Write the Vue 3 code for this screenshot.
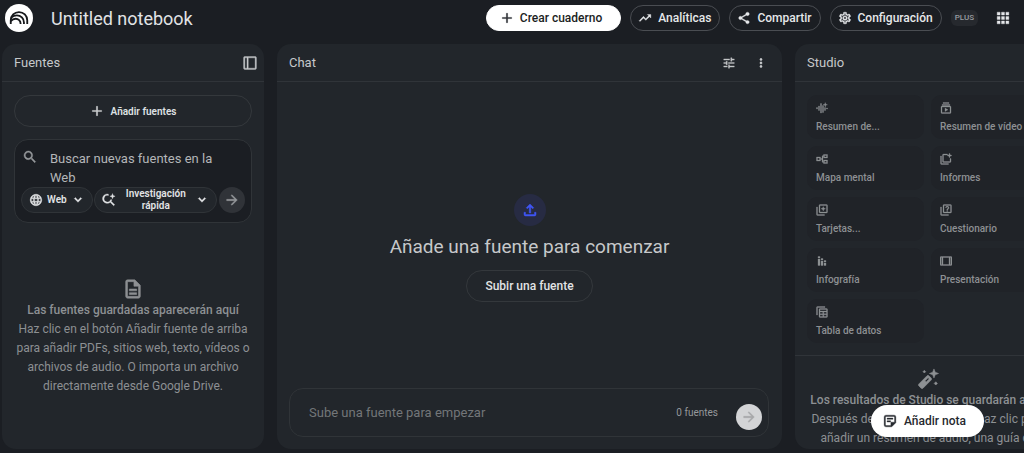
<template>
  <div class="app">
    <header class="topbar">
      <a class="logo" href="#" aria-label="NotebookLM">
        <svg viewBox="0 0 24 24" fill="none" stroke="#16181b" stroke-width="2">
          <path d="M3 18.500v-4a9 9 0 0 1 18 0v4" />
          <path d="M3.800 11.400c1.600-1.500 3.600-2.300 5.900-2.300a7.700 7.700 0 0 1 7.700 7.700v1.700" />
          <path d="M3 15.400c1.400-1.700 3.300-2.600 5.400-2.600a5.300 5.300 0 0 1 5.300 5.300v.4" />
        </svg>
      </a>
      <h1 class="title">Untitled notebook</h1>

      <div class="actions">
        <button class="pill primary">
          <svg class="icon" viewBox="0 0 24 24"><path :d="icons.add" /></svg>
          Crear cuaderno
        </button>
        <button v-for="action in actions" :key="action.label" class="pill">
          <svg class="icon" viewBox="0 0 24 24"><path :d="icons[action.icon]" /></svg>
          {{ action.label }}
        </button>
        <span class="plus">PLUS</span>
        <button class="icon-button apps" aria-label="Apps">
          <svg class="icon" viewBox="0 0 24 24"><path :d="icons.apps" /></svg>
        </button>
      </div>
    </header>

    <main class="workspace">
      <section class="panel">
        <div class="panel-header">
          <h2>Fuentes</h2>
          <button class="icon-button" aria-label="Panel">
            <svg class="icon" viewBox="0 0 24 24"><path fill-rule="evenodd" :d="icons.dock" /></svg>
          </button>
        </div>

        <div class="sources">
          <button class="add-source">
            <svg class="icon" viewBox="0 0 24 24"><path :d="icons.add" /></svg>
            Añadir fuentes
          </button>

          <form class="search" @submit.prevent>
            <div class="search-row">
              <svg class="icon" viewBox="0 0 24 24"><path :d="icons.search" /></svg>
              <textarea v-model="search" rows="2" aria-label="Buscar nuevas fuentes en la Web"
                placeholder="Buscar nuevas fuentes en la Web"></textarea>
            </div>
            <div class="search-tools">
              <button type="button" class="chip" aria-haspopup="menu">
                <svg class="icon" viewBox="0 0 24 24"><path :d="icons.globe" /></svg>
                <span>Web</span>
                <svg class="icon" viewBox="0 0 24 24"><path :d="icons.down" /></svg>
              </button>
              <button type="button" class="chip wide" aria-haspopup="menu">
                <svg class="icon" viewBox="0 0 24 24"><path :d="icons.searchSpark" /></svg>
                <span>Investigación rápida</span>
                <svg class="icon" viewBox="0 0 24 24"><path :d="icons.down" /></svg>
              </button>
              <button class="send dark" aria-label="Enviar">
                <svg class="icon" viewBox="0 0 24 24"><path :d="icons.arrow" /></svg>
              </button>
            </div>
          </form>
        </div>

        <div class="empty">
          <svg class="icon large" viewBox="0 0 24 24"><path :d="icons.doc" /></svg>
          <p class="strong">Las fuentes guardadas aparecerán aquí</p>
          <p>Haz clic en el botón Añadir fuente de arriba<br>para añadir PDFs, sitios web, texto, vídeos o<br>archivos
            de audio. O importa un archivo<br>directamente desde Google Drive.</p>
        </div>
      </section>

      <section class="panel">
        <div class="panel-header">
          <h2>Chat</h2>
          <div class="header-tools">
            <button class="icon-button" aria-label="Ajustes">
              <svg class="icon" viewBox="0 0 24 24"><path :d="icons.tune" /></svg>
            </button>
            <button class="icon-button" aria-label="Más">
              <svg class="icon" viewBox="0 0 24 24"><path :d="icons.more" /></svg>
            </button>
          </div>
        </div>

        <div class="chat">
          <div class="upload">
            <svg class="icon" viewBox="0 0 24 24"><path :d="icons.upload" /></svg>
          </div>
          <h3>Añade una fuente para comenzar</h3>
          <button class="upload-button">Subir una fuente</button>
        </div>

        <form class="composer" @submit.prevent>
          <input v-model="message" type="text" aria-label="Mensaje" placeholder="Sube una fuente para empezar">
          <span class="count">0 fuentes</span>
          <button class="send" aria-label="Enviar">
            <svg class="icon" viewBox="0 0 24 24"><path :d="icons.arrow" /></svg>
          </button>
        </form>
      </section>

      <section class="panel">
        <div class="panel-header">
          <h2>Studio</h2>
        </div>

        <div class="tiles">
          <button v-for="tile in tiles" :key="tile.label" class="tile">
            <svg class="icon" viewBox="0 0 24 24"><path fill-rule="evenodd" :d="icons[tile.icon]" /></svg>
            {{ tile.label }}
          </button>
        </div>

        <div class="results">
          <svg class="icon large" viewBox="0 0 24 24"><path fill-rule="evenodd" :d="icons.wand" /></svg>
          <p class="strong">Los resultados de Studio se guardarán aquí.</p>
          <p>Después de añadir las fuentes, haz clic para<br>añadir un resumen de audio, una guía de</p>
        </div>
      </section>
    </main>

    <button class="note">
      <svg class="icon" viewBox="0 0 24 24"><path :d="icons.note" /></svg>
      Añadir nota
    </button>
  </div>
</template>

<script setup>

import { ref } from 'vue';

const search = ref('');
const message = ref('');

const actions = [
  { label: 'Analíticas', icon: 'trending' },
  { label: 'Compartir', icon: 'share' },
  { label: 'Configuración', icon: 'settings' }
];

const tiles = [
  { label: 'Resumen de...', icon: 'audio' },
  { label: 'Resumen de vídeo', icon: 'video' },
  { label: 'Mapa mental', icon: 'mindmap' },
  { label: 'Informes', icon: 'report' },
  { label: 'Tarjetas...', icon: 'cards' },
  { label: 'Cuestionario', icon: 'quiz' },
  { label: 'Infografía', icon: 'bars' },
  { label: 'Presentación', icon: 'slides' },
  { label: 'Tabla de datos', icon: 'table' }
];

const icons = {
  add: 'M20 13h-7v7h-2v-7H4v-2h7V4h2v7h7z',
  trending: 'M16 6l2.29 2.29-4.88 4.88-4-4L2 16.59 3.41 18l6-6 4 4 6.3-6.29L22 12V6z',
  share: 'M18 16.08c-.76 0-1.44.3-1.96.77L8.91 12.7c.05-.23.09-.46.09-.7s-.04-.47-.09-.7l7.05-4.11c.54.5 1.25.81 2.04.81 1.66 0 3-1.34 3-3s-1.34-3-3-3-3 1.34-3 3c0 .24.04.47.09.7L8.04 9.81C7.5 9.31 6.79 9 6 9c-1.66 0-3 1.34-3 3s1.34 3 3 3c.79 0 1.5-.31 2.04-.81l7.12 4.16c-.05.21-.08.43-.08.65 0 1.61 1.31 2.92 2.92 2.92s2.92-1.31 2.92-2.92-1.31-2.92-2.92-2.92z',
  settings: 'M19.43 12.98c.04-.32.07-.64.07-.98 0-.34-.03-.66-.07-.98l2.11-1.65c.19-.15.24-.42.12-.64l-2-3.46c-.09-.16-.26-.25-.44-.25-.06 0-.12.01-.17.03l-2.49 1c-.52-.4-1.08-.73-1.69-.98l-.38-2.65C14.46 2.18 14.25 2 14 2h-4c-.25 0-.46.18-.49.42l-.38 2.65c-.61.25-1.17.59-1.69.98l-2.49-1c-.06-.02-.12-.03-.18-.03-.17 0-.34.09-.43.25l-2 3.46c-.13.22-.07.49.12.64l2.11 1.65c-.04.32-.07.65-.07.98 0 .33.03.66.07.98l-2.11 1.65c-.19.15-.24.42-.12.64l2 3.46c.09.16.26.25.44.25.06 0 .12-.01.17-.03l2.49-1c.52.4 1.08.73 1.69.98l.38 2.65c.03.24.24.42.49.42h4c.25 0 .46-.18.49-.42l.38-2.65c.61-.25 1.17-.59 1.69-.98l2.49 1c.06.02.12.03.18.03.17 0 .34-.09.43-.25l2-3.46c.12-.22.07-.49-.12-.64l-2.11-1.65zm-1.98-1.71c.04.31.05.52.05.73 0 .21-.02.43-.05.73l-.14 1.13.89.7 1.08.84-.7 1.21-1.27-.51-1.04-.42-.9.68c-.43.32-.84.56-1.25.73l-1.06.43-.16 1.13-.2 1.35h-1.4l-.19-1.35-.16-1.13-1.06-.43c-.43-.18-.83-.41-1.23-.71l-.91-.7-1.06.43-1.27.51-.7-1.21 1.08-.84.89-.7-.14-1.13c-.03-.31-.05-.54-.05-.74s.02-.43.05-.73l.14-1.13-.89-.7-1.08-.84.7-1.21 1.27.51 1.04.42.9-.68c.43-.32.84-.56 1.25-.73l1.06-.43.16-1.13.2-1.35h1.39l.19 1.35.16 1.13 1.06.43c.43.18.83.41 1.23.71l.91.7 1.06-.43 1.27-.51.7 1.21-1.07.85-.89.7.14 1.13zM12 8c-2.21 0-4 1.79-4 4s1.79 4 4 4 4-1.79 4-4-1.79-4-4-4zm0 6c-1.1 0-2-.9-2-2s.9-2 2-2 2 .9 2 2-.9 2-2 2z',
  apps: 'M2 2h5v5H2zM9.5 2h5v5h-5zM17 2h5v5h-5zM2 9.5h5v5H2zM9.5 9.5h5v5h-5zM17 9.5h5v5h-5zM2 17h5v5H2zM9.5 17h5v5h-5zM17 17h5v5h-5z',
  dock: 'M3 1h18a2 2 0 0 1 2 2v18a2 2 0 0 1-2 2H3a2 2 0 0 1-2-2V3a2 2 0 0 1 2-2zM3.2 3.2v17.600h3.600V3.200zM9 3.200v17.600h11.800V3.200z',
  tune: 'M3 17v2h6v-2H3zM3 5v2h10V5H3zm10 16v-2h8v-2h-8v-2h-2v6h2zM7 9v2H3v2h4v2h2V9H7zm14 4v-2H11v2h10zm-6-4h2V7h4V5h-4V3h-2v6z',
  more: 'M12 8c1.1 0 2-.9 2-2s-.9-2-2-2-2 .9-2 2 .9 2 2 2zm0 2c-1.1 0-2 .9-2 2s.9 2 2 2 2-.9 2-2-.9-2-2-2zm0 6c-1.1 0-2 .9-2 2s.9 2 2 2 2-.9 2-2-.9-2-2-2z',
  search: 'M15.5 14h-.79l-.28-.27A6.471 6.471 0 0 0 16 9.5 6.5 6.5 0 1 0 9.5 16c1.61 0 3.09-.59 4.23-1.57l.27.28v.79l5 4.99L20.49 19l-4.99-5zm-6 0C7.01 14 5 11.99 5 9.5S7.01 5 9.5 5 14 7.01 14 9.5 11.99 14 9.5 14z',
  globe: 'M11.99 2C6.47 2 2 6.48 2 12s4.47 10 9.99 10C17.52 22 22 17.52 22 12S17.52 2 11.99 2zm6.93 6h-2.95c-.32-1.25-.78-2.45-1.38-3.56 1.84.63 3.37 1.91 4.33 3.56zM12 4.04c.83 1.2 1.48 2.53 1.91 3.96h-3.82c.43-1.43 1.08-2.76 1.91-3.96zM4.26 14C4.1 13.36 4 12.69 4 12s.1-1.36.26-2h3.38c-.08.66-.14 1.32-.14 2s.06 1.34.14 2H4.26zm.82 2h2.95c.32 1.25.78 2.45 1.38 3.56-1.84-.63-3.37-1.9-4.33-3.56zm2.95-8H5.08c.96-1.66 2.49-2.93 4.33-3.56C8.81 5.55 8.35 6.75 8.03 8zM12 19.96c-.83-1.2-1.48-2.53-1.91-3.96h3.82c-.43 1.43-1.08 2.76-1.91 3.96zM14.34 14H9.66c-.09-.66-.16-1.32-.16-2s.07-1.35.16-2h4.68c.09.65.16 1.32.16 2s-.07 1.34-.16 2zm.25 5.56c.6-1.11 1.06-2.31 1.38-3.56h2.95c-.96 1.65-2.49 2.93-4.33 3.56zM16.36 14c.08-.66.14-1.32.14-2s-.06-1.34-.14-2h3.38c.16.64.26 1.31.26 2s-.1 1.36-.26 2h-3.38z',
  down: 'M7.4 7.8L12 12.4l4.6-4.6L18.4 9.6 12 16 5.6 9.6z',
  searchSpark: 'M11 2v2.3A5.7 5.7 0 1 0 14.7 11.5h2.4a8 8 0 0 1-1.4 2.7l6 6-1.7 1.7-6-6A8 8 0 1 1 11 2zM18 1l1.2 3.3L22.5 5.5l-3.3 1.2L18 10l-1.2-3.3-3.3-1.2 3.3-1.2z',
  arrow: 'M12 4l-1.41 1.41L16.17 11H4v2h12.17l-5.58 5.59L12 20l8-8z',
  doc: 'M8 16h8v2H8zm0-4h8v2H8zm6-10H6c-1.1 0-2 .9-2 2v16c0 1.1.89 2 1.99 2H18c1.1 0 2-.9 2-2V8l-6-6zm4 18H6V4h7v5h5v11z',
  upload: 'M11 16V7.85L8.4 10.45 7 9l5-5 5 5-1.4 1.45L13 7.85V16zM4 15h2v3h12v-3h2v3a2 2 0 0 1-2 2H6a2 2 0 0 1-2-2z',
  audio: 'M1 11h2v3H1zM5 8h2v9H5zM9 3h2v19H9zM13 7h2v14h-2zM17 11h2v6h-2zM21 12h2v2h-2zM18.5 1l1.1 3.4L23 5.5l-3.4 1.1L18.5 10l-1.1-3.4L14 5.5l3.4-1.1z',
  video: 'M6 1h12v2H6zM4 5h16v2H4zM4 8h16a2 2 0 0 1 2 2v11a2 2 0 0 1-2 2H4a2 2 0 0 1-2-2V10a2 2 0 0 1 2-2zm0 2.2v10.6h16V10.2zm6 1.8l6 3.5-6 3.5z',
  mindmap: 'M1 8h8v3h3V7a2 2 0 0 1 2-2h1V3h8v7h-8V7h-1v10h1v-3h8v7h-8v-2h-1a2 2 0 0 1-2-2v-4H9v3H1zm2 2v4h4v-4zm14-5v3h4V5zm0 11v3h4v-3z',
  report: 'M1 6h2v15h14v2H3a2 2 0 0 1-2-2zM7 2h8v2H7v13h13v-6h2v6a2 2 0 0 1-2 2H7a2 2 0 0 1-2-2V4a2 2 0 0 1 2-2zM19 0l1.3 3.7L24 5l-3.7 1.3L19 10l-1.3-3.7L14 5l3.7-1.3z',
  cards: 'M1 6h2v15h14v2H3a2 2 0 0 1-2-2zM8 1h13a2 2 0 0 1 2 2v13a2 2 0 0 1-2 2H8a2 2 0 0 1-2-2V3a2 2 0 0 1 2-2zm0 2v13h13V3zm6.5 2l1.3 3.2L19 9.5l-3.2 1.3-1.3 3.2-1.3-3.2L10 9.5l3.2-1.3z',
  quiz: 'M1 6h2v15h14v2H3a2 2 0 0 1-2-2zM8 1h13a2 2 0 0 1 2 2v13a2 2 0 0 1-2 2H8a2 2 0 0 1-2-2V3a2 2 0 0 1 2-2zm0 2v13h13V3zm5.500 10h2v2h-2zM11 7.500a3.500 3.500 0 1 1 5.600 2.800c-.8.6-1.100.9-1.100 1.700h-2c0-1.800.8-2.500 1.700-3.200a1.500 1.500 0 1 0-2.200-1.300z',
  bars: 'M4 3h4v3H4zM4 8h4v13H4zM10 7h4v3h-4zM10 12h4v9h-4zM16 11h4v3h-4zM16 16h4v5h-4z',
  slides: 'M2 3h20a2 2 0 0 1 2 2v14a2 2 0 0 1-2 2H2a2 2 0 0 1-2-2V5a2 2 0 0 1 2-2zm0 2v14h1.500V5zm4 0v14h12V5zm14.500 0v14H22V5z',
  table: 'M1 3a2 2 0 0 1 2-2h15v2H3v15H1zM8 5h13a2 2 0 0 1 2 2v14a2 2 0 0 1-2 2H8a2 2 0 0 1-2-2V7a2 2 0 0 1 2-2zm0 2v3h13V7zm0 5v3.500h5.500V12zm7.500 0v3.500H21V12zM8 17.500V21h5.500v-3.500zm7.500 0V21H21v-3.500z',
  wand: 'M13 8.500l2.500 2.500a1.500 1.500 0 0 1 0 2.100L6.600 22a1.500 1.500 0 0 1-2.100 0L2 19.500a1.500 1.500 0 0 1 0-2.100L10.900 8.500a1.500 1.500 0 0 1 2.100 0zm-.9 2.200l-3.300 3.300 1.200 1.200 3.300-3.300zM18.500 1l1.400 3.600L23.500 6l-3.600 1.400L18.500 11l-1.400-3.600L13.500 6l3.600-1.400zM8 2.500l1.500 1.500L8 5.500 6.500 4zM20.500 15l1.800 1.800-1.800 1.800-1.800-1.800z',
  note: 'M5 2h14a3 3 0 0 1 3 3v10l-7 7H5a3 3 0 0 1-3-3V5a3 3 0 0 1 3-3zm0 2.200a.8.8 0 0 0-.8.8v14c0 .5.3.8.8.8h8.500V14h6.300V5a.8.8 0 0 0-.8-.8zM7 7h10v2.200H7zM7 11.500h6v2.200H7z'
};

</script>

<style>
body {
  background-color: #1b1e23;
}
</style>

<style scoped>
.app {
  display: flex;
  flex-direction: column;
  height: 100vh;
  overflow: hidden;
  box-sizing: border-box;
  padding-bottom: 4px;
  background-color: #1b1e23;
  color: #c6c8ca;
  font-family: "Google Sans Text", Roboto, "Liberation Sans", sans-serif;
  font-size: 12px;
}

h1,
h2,
h3,
p {
  margin: 0;
  font-weight: 400;
}

button {
  display: flex;
  align-items: center;
  justify-content: center;
  box-sizing: border-box;
  flex-shrink: 0;
  padding: 0;
  border: none;
  background-color: transparent;
  color: inherit;
  font-family: inherit;
  font-size: 12px;
  cursor: pointer;
}

.icon {
  display: block;
  flex-shrink: 0;
  width: 14px;
  height: 14px;
  fill: currentColor;
  stroke: currentColor;
  stroke-width: 0.6;
}

.icon.large {
  width: 22px;
  height: 22px;
  margin-bottom: 1px;
}

.topbar {
  display: flex;
  align-items: center;
  flex-shrink: 0;
  height: 36px;
  padding: 0 14px 0 5px;
  margin-bottom: 8px;
}

.logo {
  display: flex;
  align-items: center;
  justify-content: center;
  width: 28px;
  height: 28px;
  border-radius: 50%;
  background-color: #fff;
}

.logo svg {
  width: 22px;
  height: 22px;
}

.title {
  margin-left: 18px;
  font-size: 18px;
  color: #e1e3e5;
}

.actions {
  display: flex;
  align-items: center;
  gap: 9px;
  margin-left: auto;
}

.pill {
  gap: 6px;
  height: 26px;
  padding: 0 8px 0 7px;
  border: 1px solid #4a4d52;
  border-radius: 13px;
  color: #e6e8ea;
  font-weight: 500;
}

.pill.primary {
  padding: 0 18px 0 13px;
  border-color: #fff;
  background-color: #fff;
  color: #1b1e23;
}

.plus {
  padding: 0 4px;
  border-radius: 6px;
  background-color: #26292e;
  color: #9a9da1;
  font-size: 8px;
  font-weight: 500;
  line-height: 16px;
}

.icon-button.apps {
  margin-left: 9px;
  color: #e6e8ea;
}

.workspace {
  display: grid;
  grid-template-columns: 262px minmax(0, 1fr) 266px;
  gap: 13px;
  flex: 1;
  min-height: 0;
  min-width: 1059px;
  padding-left: 2px;
}

.panel {
  display: flex;
  flex-direction: column;
  min-height: 0;
  overflow: hidden;
  border-radius: 14px;
  background-color: #22262b;
}

.panel-header {
  display: flex;
  align-items: center;
  justify-content: space-between;
  flex-shrink: 0;
  box-sizing: border-box;
  height: 38px;
  padding: 0 7px 0 12px;
  border-bottom: 1px solid #303439;
}

.panel-header h2 {
  font-size: 13px;
}

.header-tools {
  display: flex;
  gap: 18px;
  padding-right: 7px;
}

.sources {
  padding: 13px 12px 0;
}

.add-source {
  gap: 7px;
  width: 100%;
  height: 32px;
  border: 1px solid #34383c;
  border-radius: 16px;
  color: #dfe1e3;
  font-size: 10px;
  font-weight: 600;
}

.search {
  box-sizing: border-box;
  margin-top: 12px;
  padding: 9px 6px;
  border: 1px solid #303438;
  border-radius: 14px;
  background-color: #1b1e23;
}

.search-row {
  display: flex;
  gap: 12px;
  padding: 0 1px;
  color: #95989b;
}

.search-row .icon {
  width: 16px;
  height: 16px;
}

.search textarea {
  flex: 1;
  min-width: 0;
  padding: 0 24px 0 0;
  border: none;
  outline: none;
  resize: none;
  background-color: transparent;
  color: #c6c8ca;
  font-family: inherit;
  font-size: 13px;
  line-height: 19px;
}

.search textarea::placeholder {
  color: #b4b6b8;
}

.search-tools {
  display: flex;
  align-items: center;
  justify-content: space-between;
}

.chip {
  gap: 4px;
  height: 26px;
  padding: 0 7px;
  border: 1px solid #303438;
  border-radius: 13px;
  background-color: #22262b;
  color: #e1e3e5;
  font-size: 10px;
  font-weight: 600;
  line-height: 12px;
}

.chip.wide {
  width: 123px;
}

.chip.wide span {
  flex: 1;
}

.send {
  width: 26px;
  height: 26px;
  border-radius: 50%;
  background-color: #d3d4d6;
  color: #a6a7a9;
}

.send .icon {
  width: 16px;
  height: 16px;
}

.send.dark {
  background-color: #303338;
  color: #95989b;
}

.empty {
  display: flex;
  flex-direction: column;
  align-items: center;
  margin-top: 55px;
}

.empty p,
.results p {
  color: #8d9093;
  text-align: center;
  white-space: nowrap;
  line-height: 19px;
}

.empty .icon,
.results .icon {
  color: #8d9093;
}

.empty .strong,
.results .strong {
  font-weight: 500;
}

.chat {
  display: flex;
  flex: 1;
  flex-direction: column;
  align-items: center;
  justify-content: center;
  min-height: 0;
  padding-top: 26px;
}

.upload {
  display: flex;
  align-items: center;
  justify-content: center;
  width: 32px;
  height: 32px;
  border-radius: 50%;
  background-color: #272b43;
  color: #3f55f5;
}

.upload .icon {
  width: 18px;
  height: 18px;
}

.chat h3 {
  margin: 8px 0 10px;
  font-size: 19px;
  line-height: 26px;
}

.upload-button {
  height: 32px;
  padding: 0 18px;
  border: 1px solid #34383c;
  border-radius: 16px;
  color: #e1e3e5;
  font-weight: 500;
}

.composer {
  display: flex;
  align-items: center;
  flex-shrink: 0;
  box-sizing: border-box;
  height: 49px;
  margin: 0 13px 12px 12px;
  padding: 8px 6px 0 19px;
  border: 1px solid #303438;
  border-radius: 14px;
}

.composer input {
  flex: 1;
  min-width: 0;
  margin-bottom: 8px;
  padding: 0;
  border: none;
  outline: none;
  background-color: transparent;
  color: #c6c8ca;
  font-family: inherit;
  font-size: 13px;
}

.composer input::placeholder {
  color: #737679;
}

.count {
  margin: 0 18px 8px 0;
  color: #95989b;
  font-size: 10px;
}

.tiles {
  display: grid;
  grid-template-columns: 1fr 1fr;
  gap: 7px;
  padding: 13px 13px 12px 12px;
}

.tile {
  flex-direction: column;
  align-items: flex-start;
  gap: 7px;
  height: 44px;
  padding: 0 9px;
  border-radius: 10px;
  background-color: #202328;
  color: #8d9093;
  font-size: 10px;
  font-weight: 500;
  line-height: 12px;
}

.tile .icon {
  width: 12px;
  height: 12px;
}

.results {
  display: flex;
  flex-direction: column;
  align-items: center;
  padding-top: 12px;
  border-top: 1px solid #303439;
}

/* floats over the studio panel */
.note {
  position: absolute;
  right: 40px;
  bottom: 16px;
  gap: 7px;
  height: 32px;
  padding: 0 18px 0 12px;
  border-radius: 16px;
  background-color: #fff;
  color: #26292e;
  font-weight: 500;
}
</style>
